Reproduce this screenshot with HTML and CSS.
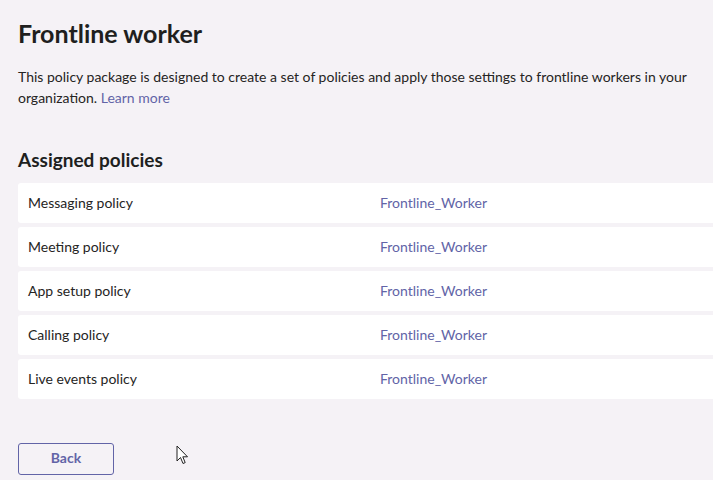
FILE: index.html
```html
<!DOCTYPE html>
<html lang="en">
<head>
<meta charset="utf-8">
<title>Frontline worker</title>
<link rel="stylesheet" href="styles.css">
</head>
<body>
<main class="page">
  <h1 class="title">Frontline worker</h1>
  <p class="desc">This policy package is designed to create a set of policies and apply those settings to frontline workers in your organization. <a class="link" href="#">Learn more</a></p>
  <h2 class="section">Assigned policies</h2>
  <ul class="rows">
    <li class="row"><span class="name">Messaging policy</span><span class="value">Frontline_Worker</span></li>
    <li class="row"><span class="name">Meeting policy</span><span class="value">Frontline_Worker</span></li>
    <li class="row"><span class="name">App setup policy</span><span class="value">Frontline_Worker</span></li>
    <li class="row"><span class="name">Calling policy</span><span class="value">Frontline_Worker</span></li>
    <li class="row"><span class="name">Live events policy</span><span class="value">Frontline_Worker</span></li>
  </ul>
  <div class="actions">
    <button class="btn" type="button"><span class="btn-label">Back</span></button>
  </div>
</main>
<svg class="cursor" width="13" height="20" viewBox="0 0 13 20">
  <path d="M1 1 L1 16 L4.5 12.5 L7 18.5 L9.2 17.6 L6.8 11.8 L11.5 11.8 Z" fill="#fff" stroke="#222" stroke-width="1" stroke-linejoin="round"/>
</svg>
</body>
</html>
```
FILE: styles.css
```css
html, body {
  margin: 0;
  padding: 0;
  background: #f5f2f6;
  overflow: hidden;
}
body {
  font-family: Lato, "Noto Sans", sans-serif;
  color: #252423;
  position: relative;
  height: 480px;
}
.page {
  padding: 18px 0 0 18px;
}
.title {
  margin: 0;
  font-size: 25px;
  font-weight: 700;
  line-height: 30px;
  color: #201f1e;
}
.desc {
  margin: 18px 0 0;
  max-width: 680px;
  font-size: 14px;
  line-height: 21px;
  color: #252423;
}
.link {
  color: #6264a7;
  text-decoration: none;
}
.section {
  margin: 40px 0 0;
  font-size: 19px;
  font-weight: 700;
  line-height: 24px;
  color: #201f1e;
}
.rows {
  list-style: none;
  margin: 11px 0 0;
  padding: 0;
  display: flex;
  flex-direction: column;
  gap: 4px;
}
.row {
  display: flex;
  align-items: center;
  box-sizing: border-box;
  height: 40px;
  background: #ffffff;
  border-radius: 3px 0 0 3px;
  padding: 0 0 2px 10px;
  font-size: 14px;
}
.name {
  width: 352px;
  color: #252423;
}
.value {
  color: #6264a7;
}
.actions {
  margin-top: 44px;
}
.btn {
  display: flex;
  align-items: center;
  justify-content: center;
  box-sizing: border-box;
  width: 96px;
  height: 32px;
  padding: 0 0 4px;
  background: transparent;
  border: 1px solid #6264a7;
  border-radius: 3px;
  color: #6264a7;
  font-family: Lato, "Noto Sans", sans-serif;
  font-size: 14px;
  font-weight: 700;
  cursor: pointer;
}
.cursor {
  position: absolute;
  left: 176px;
  top: 445px;
}
```
